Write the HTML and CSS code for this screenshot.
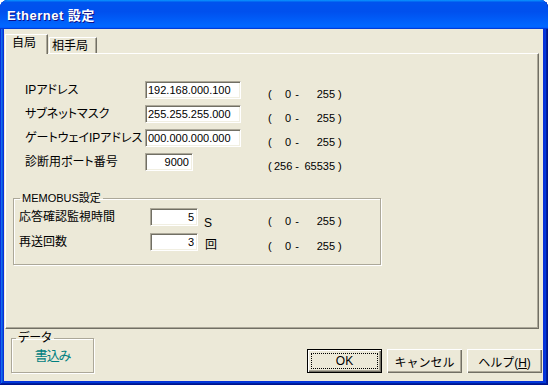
FILE: index.html
```html
<!DOCTYPE html>
<html lang="ja">

<head>
  <meta charset="UTF-8">
  <meta name="viewport" content="width=device-width, initial-scale=1.0">
  <title>Ethernet 設定</title>
  <link rel="stylesheet" href="styles.css">
</head>

<body>
  <div class="window">
    <div class="titlebar"><span class="title">Ethernet 設定</span></div>

    <div class="client">
      <div class="tabs">
        <div class="tab active">自局</div>
        <div class="tab">相手局</div>
      </div>

      <div class="panel">
        <div class="form">
          <label>IPアドレス</label>
          <input class="field wide" type="text" value="192.168.000.100">
          <div class="range"><span>(</span><span class="lo">0</span><span class="dash">-</span><span class="hi">255</span><span class="close">)</span></div>

          <label>サブネットマスク</label>
          <input class="field wide" type="text" value="255.255.255.000">
          <div class="range"><span>(</span><span class="lo">0</span><span class="dash">-</span><span class="hi">255</span><span class="close">)</span></div>

          <label>ゲートウェイIPアドレス</label>
          <input class="field wide" type="text" value="000.000.000.000">
          <div class="range"><span>(</span><span class="lo">0</span><span class="dash">-</span><span class="hi">255</span><span class="close">)</span></div>

          <label>診断用ポート番号</label>
          <input class="field num" type="text" value="9000">
          <div class="range"><span>(</span><span class="lo">256</span><span class="dash">-</span><span class="hi">65535</span><span class="close">)</span></div>
        </div>

        <fieldset class="group memobus">
          <legend>MEMOBUS設定</legend>
          <div class="form form-memobus">
            <label>応答確認監視時間</label>
            <input class="field num" type="text" value="5">
            <span class="unit unit-s">S</span>
            <div class="range"><span>(</span><span class="lo">0</span><span class="dash">-</span><span class="hi">255</span><span class="close">)</span></div>

            <label>再送回数</label>
            <input class="field num" type="text" value="3">
            <span class="unit">回</span>
            <div class="range"><span>(</span><span class="lo">0</span><span class="dash">-</span><span class="hi">255</span><span class="close">)</span></div>
          </div>
        </fieldset>
      </div>

      <div class="footer">
        <fieldset class="group data">
          <legend>データ</legend>
          <div class="write">書込み</div>
        </fieldset>

        <div class="buttons">
          <button class="btn default">OK</button>
          <button class="btn">キャンセル</button>
          <button class="btn">ヘルプ(<u>H</u>)</button>
        </div>
      </div>
    </div>
  </div>
</body>

</html>
```

FILE: styles.css
```css
body {
  margin: 0;
  background-color: #fff;
  font-family: 'Liberation Sans', 'Noto Sans CJK JP', sans-serif;
  font-size: 12px;
  color: #000;
}

.window {
  width: 548px;
  height: 385px;
  box-sizing: border-box;
  display: flex;
  flex-direction: column;
  padding: 0 5px 4px 4px;
  background-color: #0831d9;
  border-radius: 8px 8px 0 0;
  box-shadow: inset -1px -1px #00138c, inset 1px 1px #0831d9,
    inset -2px -2px #001ea0, inset 2px 2px #166aee,
    inset -3px -3px #003bda, inset 3px 3px #0855dd;
  font-feature-settings: "palt";
}

/* title bar */
.titlebar {
  height: 29px;
  margin: 0 -5px 0 -4px;
  padding-left: 7px;
  display: flex;
  align-items: center;
  border-radius: 8px 8px 0 0;
  background: linear-gradient(180deg, #0997ff, #0053ee 8%, #0050ee 40%, #0066ff 88%, #0066ff 93%, #005bff 95%, #003dd7 96%, #003dd7);
}

.title {
  color: #fff;
  font-size: 13px;
  font-weight: bold;
  letter-spacing: 0.5px;
  text-shadow: 1px 1px #0f1089;
}

.client {
  flex: 1;
  display: flex;
  flex-direction: column;
  padding-top: 5px;
  background-color: #ece9d8;
}

/* tabs */
.tabs {
  display: flex;
  align-items: flex-end;
  margin-left: 1px;
}

.tab {
  box-sizing: border-box;
  height: 16px;
  width: 48px;
  margin-left: 1px;
  padding: 2px 0 0 2px;
  line-height: 12px;
  border: 1px solid;
  border-bottom: none;
  border-color: #fff #716f64 transparent #fff;
  box-shadow: inset -1px 0 #aca899;
  background-color: #ece9d8;
}

.tab.active {
  position: relative;
  z-index: 1;
  width: 43px;
  height: 20px;
  margin-left: 0;
  margin-bottom: -1px;
  padding-left: 6px;
}

/* page of the tab */
.panel {
  box-sizing: border-box;
  height: 276px;
  margin: 0 4px 0 1px;
  border: 1px solid;
  border-color: #fff #716f64 #716f64 #fff;
  box-shadow: inset -1px -1px #aca899;
  padding-top: 27px;
}

.form {
  display: grid;
  grid-template-columns: 120px 123px auto;
  grid-auto-rows: 18px;
  row-gap: 6px;
  align-items: center;
  margin-left: 19px;
}

.form-memobus {
  grid-template-columns: 131px 48px 70px auto;
  row-gap: 7px;
  margin-left: 5px;
}

label {
  line-height: 12px;
  white-space: nowrap;
}

.field {
  box-sizing: border-box;
  height: 18px;
  margin: 0;
  padding: 0 3px 0 2px;
  font-family: 'Liberation Sans', sans-serif;
  font-size: 11px;
  color: #000;
  background-color: #fff;
  border: 1px solid;
  border-color: #aca899 #fff #fff #aca899;
  box-shadow: inset 1px 1px #716f64, inset -1px -1px #f1efe2;
  outline: none;
}

.field.wide {
  width: 96px;
}

.field.num {
  width: 48px;
  text-align: right;
}

.unit {
  align-self: end;
  padding-left: 7px;
  line-height: 12px;
}

.unit-s {
  padding-left: 6px;
  margin-bottom: -3px;
}

.range {
  align-self: end;
  display: grid;
  grid-template-columns: 6px 17px 12px 32px auto;
  font-size: 11px;
  line-height: 12px;
  margin-bottom: -1px;
}

.range .lo,
.range .hi {
  text-align: right;
}

.range .dash {
  text-align: center;
}

.range .close {
  padding-left: 3px;
}

/* group boxes */
.group {
  margin: 0;
  padding: 0;
  border: 1px solid #aca899;
  box-shadow: 1px 1px #fff, inset 1px 1px #fff;
}

.group legend {
  margin-left: 6px;
  padding: 0 2px;
  line-height: 12px;
}

.memobus {
  width: 368px;
  margin: 21px 0 0 7px;
  padding: 4px 0 13px;
  box-sizing: border-box;
}

.memobus legend {
  font-size: 11px;
}

.footer {
  flex: 1;
  display: flex;
  align-items: flex-end;
  justify-content: space-between;
  padding: 0 1px 8px 7px;
}

.data {
  box-sizing: border-box;
  width: 83px;
  padding: 4px 0 8px;
}

.data legend {
  margin-left: 4px;
}

.write {
  line-height: 16px;
  text-align: center;
  font-size: 13px;
  letter-spacing: -1px;
  color: #008080;
}

.buttons {
  display: flex;
  gap: 5px;
}

.btn {
  width: 75px;
  height: 24px;
  padding: 0;
  font-family: 'Liberation Sans', 'Noto Sans CJK JP', sans-serif;
  font-size: 12px;
  color: #000;
  background-color: #ece9d8;
  border: none;
  box-shadow: inset 1px 1px #fff, inset -1px -1px #716f64, inset -2px -2px #aca899;
}

.btn.default {
  border: 1px solid #000;
  outline: 1px dotted #000;
  outline-offset: -5px;
}
```
